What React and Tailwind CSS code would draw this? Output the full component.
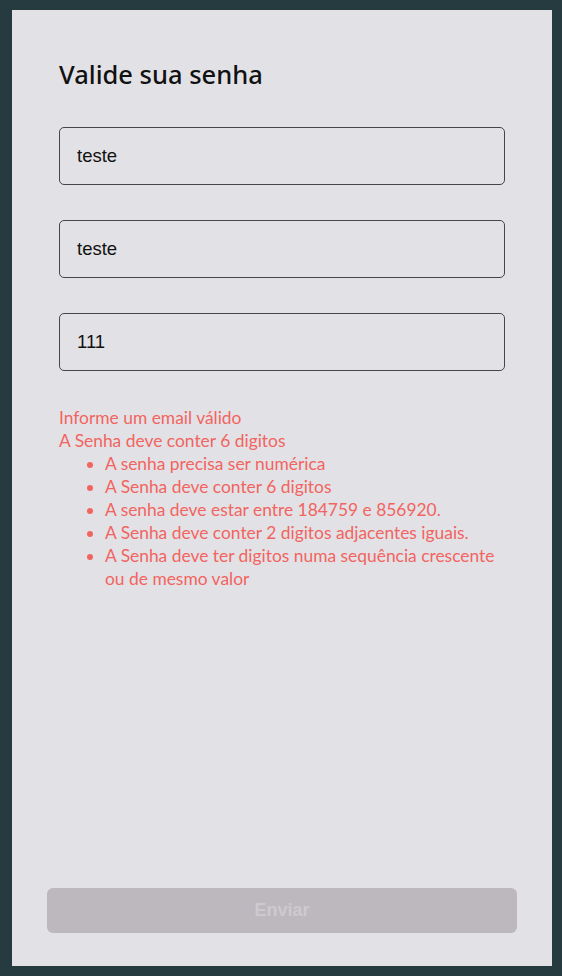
import React, { useState } from 'react';

const errors = [
  'A senha precisa ser numérica',
  'A Senha deve conter 6 digitos',
  'A senha deve estar entre 184759 e 856920.',
  'A Senha deve conter 2 digitos adjacentes iguais.',
  'A Senha deve ter digitos numa sequência crescente ou de mesmo valor',
];

function App() {
  const [email, setEmail] = useState('teste');
  const [name, setName] = useState('teste');
  const [password, setPassword] = useState('111');

  return (
    <div className="min-h-screen bg-[#263b40] pt-[10px] pb-[10px] pl-[12px] pr-[10px]">
      <div className="flex h-[956px] flex-col bg-[#e2e1e6] px-[47px] pt-[48px] pb-[33px] font-['Lato','Noto_Sans',sans-serif]">
        <h2 className="font-['Noto_Sans',sans-serif] text-[25.5px] font-medium leading-[32px] text-[#111]">Valide sua senha</h2>

        <div className="mt-[37px] flex flex-col gap-[35px]">
          <input
            type="text"
            value={email}
            onChange={(e) => setEmail(e.target.value)}
            className="h-[58px] w-full rounded-[5px] border border-[#45454a] bg-transparent px-[17px] font-['Liberation_Sans',Arial,sans-serif] text-[18.5px] text-[#111] outline-none"
          />
          <input
            type="text"
            value={name}
            onChange={(e) => setName(e.target.value)}
            className="h-[58px] w-full rounded-[5px] border border-[#45454a] bg-transparent px-[17px] font-['Liberation_Sans',Arial,sans-serif] text-[18.5px] text-[#111] outline-none"
          />
          <input
            type="text"
            value={password}
            onChange={(e) => setPassword(e.target.value)}
            className="h-[58px] w-full rounded-[5px] border border-[#45454a] bg-transparent px-[17px] font-['Liberation_Sans',Arial,sans-serif] text-[18.5px] text-[#111] outline-none"
          />
        </div>

        <div className="mt-[35px] text-[17.4px] leading-[23px] text-[#f2645f]">
          <p>Informe um email válido</p>
          <p>A Senha deve conter 6 digitos</p>
          <ul className="list-disc pl-[46px] marker:text-[#f2645f]">
            {errors.map((err) => (
              <li key={err}>{err}</li>
            ))}
          </ul>
        </div>

        <button
          disabled
          className="mx-[-12px] mt-auto h-[45px] rounded-[6px] bg-[#bcb8bd] font-['Liberation_Sans',Arial,sans-serif] text-[18px] font-bold text-[#cdcacf]"
        >
          Enviar
        </button>
      </div>
    </div>
  );
}

export default App;
